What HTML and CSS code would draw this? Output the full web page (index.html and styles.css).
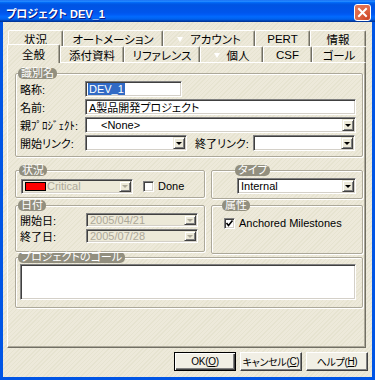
FILE: index.html
```html
<!DOCTYPE html>
<html>
<head>
<meta charset="utf-8">
<title>プロジェクト DEV_1</title>
<link rel="stylesheet" href="styles.css">
</head>
<body>

<div class="window">
	<div class="titlebar">
		<span class="title">プロジェクト DEV_1</span>
		<span class="close"><svg width="17" height="17" viewBox="0 0 17 17"><path d="M5 5 L12 12 M12 5 L5 12" stroke="#fff" stroke-width="2" stroke-linecap="square"/></svg></span>
	</div>
	<div class="client tex">
		<div class="tabrow">
			<div class="tab w55">状況</div>
			<div class="tab w100">オートメーション</div>
			<div class="tab w92"><span class="tri"></span>アカウント</div>
			<div class="tab w55">PERT</div>
			<div class="tab w56">情報</div>
		</div>
		<div class="tabrow">
			<div class="tab sel tex">全般</div>
			<div class="tab w64">添付資料</div>
			<div class="tab w76">リファレンス</div>
			<div class="tab w63"><span class="tri"></span>個人</div>
			<div class="tab w49">CSF</div>
			<div class="tab w54">ゴール</div>
		</div>
		<div class="panel">
			<div class="group ident">
				<div class="legend">識別名</div>
				<div class="row">
					<span class="lbl">略称:</span>
					<div class="field w97"><span class="hilite">DEV_1</span></div>
				</div>
				<div class="row">
					<span class="lbl">名前:</span>
					<div class="field w271">A製品開発プロジェクト</div>
				</div>
				<div class="row">
					<span class="lbl">親ﾌﾟﾛｼﾞｪｸﾄ:</span>
					<div class="field select w271"><span class="none">&lt;None&gt;</span><span class="arrow"></span></div>
				</div>
				<div class="row">
					<span class="lbl">開始リンク:</span>
					<div class="field select w102"><span class="arrow"></span></div>
					<span class="lbl end">終了リンク:</span>
					<div class="field select w102"><span class="arrow"></span></div>
				</div>
			</div>

			<div class="cols">
				<div class="col left">
					<div class="group status">
						<div class="legend">状況</div>
						<div class="row">
							<div class="field select off w112"><span class="swatch"></span><span class="gray">Critical</span><span class="arrow"></span></div>
							<span class="check"></span>
							<span class="chklbl">Done</span>
						</div>
					</div>
					<div class="group dates">
						<div class="legend">日付</div>
						<div class="row short">
							<span class="lbl wide">開始日:</span>
							<div class="field select off w112"><span class="gray">2005/04/21</span><span class="arrow"></span></div>
						</div>
						<div class="row short">
							<span class="lbl wide">終了日:</span>
							<div class="field select off w112"><span class="gray">2005/07/28</span><span class="arrow"></span></div>
						</div>
					</div>
				</div>
				<div class="col right">
					<div class="group type">
						<div class="legend">タイプ</div>
						<div class="row">
							<div class="field select w119">Internal<span class="arrow"></span></div>
						</div>
					</div>
					<div class="group attr">
						<div class="legend">属性</div>
						<div class="row">
							<span class="check on"><svg width="9" height="9" viewBox="0 0 9 9"><path d="M1.5 4 L3.5 6.5 L7.5 1.5" fill="none" stroke="#000" stroke-width="1.6"/></svg></span>
							<span class="chklbl">Anchored Milestones</span>
						</div>
					</div>
				</div>
			</div>

			<div class="group goal">
				<div class="legend">プロジェクトのゴール</div>
				<div class="memo"></div>
			</div>
		</div>
		<div class="buttons">
			<div class="btn def">OK(<u>O</u>)</div>
			<div class="btn">キャンセル(<u>C</u>)</div>
			<div class="btn">ヘルプ(<u>H</u>)</div>
		</div>
	</div>
</div>

</body>
</html>
```

FILE: styles.css
```css
body {
	margin:0;
	font-family:"Liberation Sans","Noto Sans CJK JP",sans-serif;
	font-size:11px;
	font-feature-settings:"palt";
	color:#000;
}
.window {
	width:375px;
	height:380px;
	background:#0055e5;
	display:flex;
	flex-direction:column;
}
.titlebar {
	height:22px;
	box-sizing:border-box;
	padding:3px 4px 0 6px;
	display:flex;
	align-items:center;
	justify-content:space-between;
	background:linear-gradient(to bottom,#0058ee 0%,#3593ff 4%,#288eff 6%,#127dff 8%,#036ffc 10%,#0262ee 14%,#0057e5 20%,#0054e3 24%,#0055eb 56%,#005bf5 66%,#026afe 76%,#0062ef 86%,#0052d6 92%,#0040ab 94%,#003092 100%);
}
.title {
	color:#fff;
	font-weight:bold;
	font-size:11px;
	text-shadow:1px 1px 0 #0a1882;
}
.close {
	width:17px;
	height:17px;
	box-sizing:border-box;
	border:1px solid #fff;
	border-radius:3px;
	background:radial-gradient(circle at 80% 85%,#cc4628 0%,#dc6240 40%,#e87a5a 100%);
	display:flex;
	align-items:center;
	justify-content:center;
}
.close svg {
	margin:-1px;
}
.tex {
	background:repeating-linear-gradient(135deg,#ede9da 0 2px,#e6e3d0 2px 3px) fixed;
}
.client {
	flex:1;
	margin:0 3px 3px;
	padding:8px 4px 0 4px;
}

/* tabs */
.tabrow {
	display:flex;
	align-items:flex-start;
	height:16px;
	margin-left:1px;
}
.tab {
	box-sizing:border-box;
	height:16px;
	border-top:1px solid #fff;
	border-left:1px solid #fff;
	border-right:1px solid #716f64;
	border-radius:2px 2px 0 0;
	box-shadow:inset -1px 0 0 #aca899;
	display:flex;
	align-items:center;
	justify-content:center;
	flex:none;
	padding-top:1px;
	font-size:11.5px;
}
.tab.sel {
	width:53px;
	height:19px;
	margin:-2px 0 0 -1px;
	position:relative;
	z-index:1;
	padding-top:0;
}
.w49 { width:49px; }
.w54 { width:54px; }
.w55 { width:55px; }
.w56 { width:56px; }
.w63 { width:63px; }
.w64 { width:64px; }
.w76 { width:76px; }
.w92 { width:92px; }
.w100 { width:100px; }
.tri {
	width:0;
	height:0;
	border-left:3.5px solid transparent;
	border-right:3.5px solid transparent;
	border-top:5px solid #fff;
	margin-right:7px;
}
.panel {
	width:359px;
	height:286px;
	box-sizing:border-box;
	border:1px solid;
	border-color:#fff #716f64 #716f64 #fff;
	box-shadow:inset -1px -1px 0 #aca899;
	padding:10px 2px 0 7px;
}

/* group boxes */
.group {
	box-sizing:border-box;
	border:1px solid #aca899;
	border-radius:2px;
	box-shadow:1px 1px 0 #fff,inset 1px 1px 0 #fff;
	padding:0 6px 0 4px;
}
.legend {
	width:fit-content;
	height:11px;
	line-height:11px;
	margin:-6px 0 0 -2px;
	padding:0 3px;
	background:#928f7f;
	color:#fff;
	border-radius:5px;
}
.ident { height:84px; }
.cols {
	display:flex;
	align-items:flex-start;
	gap:6px;
	margin-top:13px;
}
.col.left { width:190px; }
.col.right { width:152px; }
.status { height:28px; padding-left:5px; }
.dates { height:47px; margin-top:7px; }
.type { height:29px; padding-left:25px; }
.attr { height:49px; margin-top:6px; padding-left:12px; }
.goal { height:51px; margin-top:3px; }

.row {
	display:flex;
	align-items:center;
	height:16px;
	margin-top:2px;
}
.row.short { height:14px; }
.attr .row { margin-top:4px; }
.lbl {
	width:65px;
	flex:none;
	white-space:nowrap;
}
.lbl.wide { width:66px; }
.lbl.end {
	width:58px;
	margin-left:8px;
}

/* fields */
.field {
	height:16px;
	box-sizing:border-box;
	border:1px solid;
	border-color:#808080 #fff #fff #808080;
	box-shadow:inset 1px 1px 0 #404040,inset -1px -1px 0 #d4d0c8;
	background:#fff;
	display:flex;
	align-items:center;
	padding:0 1px 0 3px;
	flex:none;
	white-space:nowrap;
}
.short .field { height:14px; }
.status .field { height:15px; }
.w97 { width:97px; }
.w102 { width:102px; }
.w112 { width:112px; }
.w119 { width:119px; }
.w271 { width:271px; }
.hilite {
	background:#316ac5;
	color:#fff;
	padding:0 1px;
	margin-left:-1px;
}
.none { margin-left:12px; }
.arrow {
	margin-left:auto;
	width:12px;
	height:12px;
	box-sizing:border-box;
	border:1px solid;
	border-color:#ece9d8 #404040 #404040 #ece9d8;
	box-shadow:inset 1px 1px 0 #fff,inset -1px -1px 0 #808080;
	background:#ece9d8;
	display:flex;
	align-items:center;
	justify-content:center;
	flex:none;
}
.short .arrow { height:10px; }
.status .arrow { height:11px; }
.arrow::after {
	content:"";
	width:0;
	height:0;
	border-left:3px solid transparent;
	border-right:3px solid transparent;
	border-top:3px solid #000;
}
.field.off { background:#ece9d8; }
.off .arrow::after { border-top-color:#aca899; }
.gray { color:#aca899; }
.swatch {
	width:21px;
	height:9px;
	box-sizing:border-box;
	border:1px solid #000;
	background:#f00;
	margin-right:1px;
	flex:none;
}
.check {
	width:11px;
	height:11px;
	box-sizing:border-box;
	border:1px solid;
	border-color:#808080 #fff #fff #808080;
	box-shadow:inset 1px 1px 0 #404040,inset -1px -1px 0 #d4d0c8;
	background:#fff;
	margin-left:10px;
	flex:none;
	display:flex;
	align-items:center;
	justify-content:center;
}
.check.on { margin-left:0; }
.check svg { margin:-1px; }
.chklbl { margin-left:4px; }
.memo {
	height:36px;
	width:336px;
	box-sizing:border-box;
	border:1px solid;
	border-color:#808080 #fff #fff #808080;
	box-shadow:inset 1px 1px 0 #404040,inset -1px -1px 0 #d4d0c8;
	background:#fff;
	margin-top:1px;
}

/* buttons */
.buttons {
	display:flex;
	justify-content:flex-end;
	gap:4px;
	margin-top:4px;
}
.btn {
	width:62px;
	height:19px;
	box-sizing:border-box;
	border:1px solid;
	border-color:#fff #404040 #404040 #fff;
	box-shadow:inset -1px -1px 0 #808080;
	background:#f1efe5;
	display:flex;
	align-items:center;
	justify-content:center;
	white-space:nowrap;
	font-size:10px;
	letter-spacing:-0.3px;
}
.btn.def {
	border-color:#000;
	box-shadow:inset 1px 1px 0 #fff,inset -1px -1px 0 #404040,inset -2px -2px 0 #808080;
}
```
